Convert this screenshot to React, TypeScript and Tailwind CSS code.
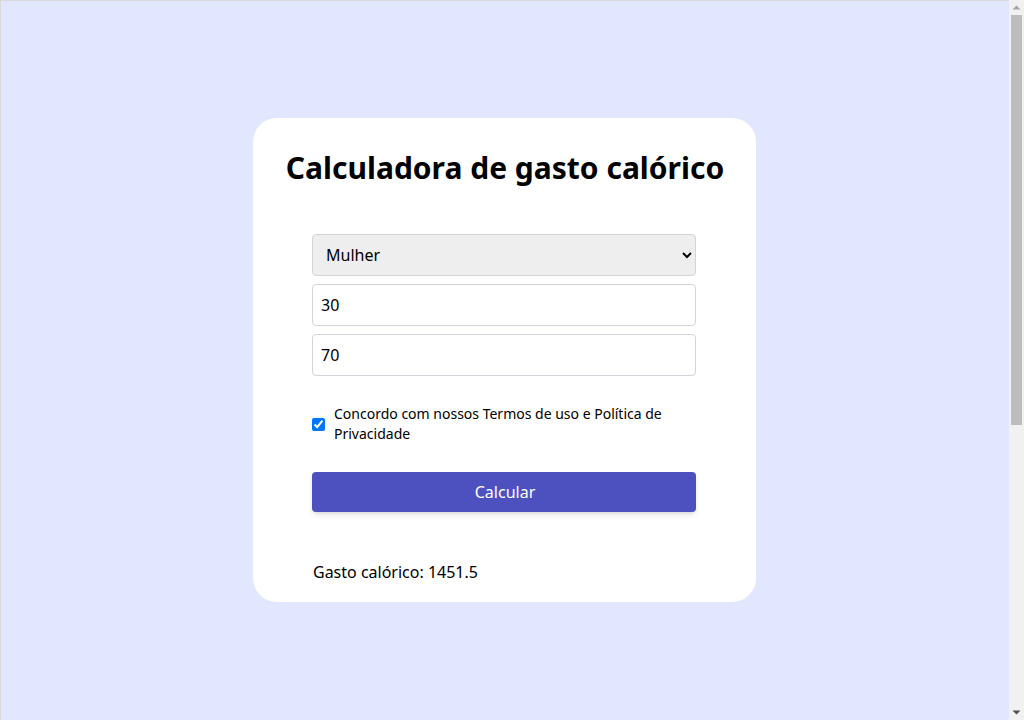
import React from "react";

function Scrollbar() {
  return (
    <div className="flex h-full w-[15px] shrink-0 flex-col bg-[#f1f1f1]">
      <div className="flex h-[15px] items-center justify-center">
        <svg width="9" height="5" viewBox="0 0 9 5">
          <polygon points="0.5,4.5 4.5,0.5 8.5,4.5" fill="#a3a3a3" />
        </svg>
      </div>
      <div className="flex-1 px-[2px]">
        <div className="h-[410px] w-full bg-[#bdbdbd]" />
      </div>
      <div className="flex h-[15px] items-center justify-center">
        <svg width="9" height="5" viewBox="0 0 9 5">
          <polygon points="0.5,0.5 8.5,0.5 4.5,4.5" fill="#505050" />
        </svg>
      </div>
    </div>
  );
}

export default function App() {
  return (
    <div
      className="flex h-[720px] overflow-hidden"
      style={{ fontFamily: '"Noto Sans", sans-serif' }}
    >
      <div className="flex-1 bg-[#e0e7ff] pt-[118px] shadow-[inset_1px_1px_0_#d9d9d9]">
        <div className="mx-auto w-[503px] bg-white rounded-[24px] pl-[59px] pr-[60px] pt-[30px] pb-[18px]">
          <h1 className="text-center text-[30px] font-bold text-black leading-[40px] -ml-[38px] -mr-[40px]">
            Calculadora de gasto calórico
          </h1>
          <form className="mt-[46px] flex flex-col gap-2">
            <select
              defaultValue="Mulher"
              className="h-[42px] w-full rounded-[4px] border border-[#d1d5db] bg-[#eeeeee] pl-[9px] pr-[8px] text-[16px] text-black"
              style={{ appearance: "auto" }}
            >
              <option>Mulher</option>
              <option>Homem</option>
            </select>
            <input
              defaultValue="30"
              className="h-[42px] w-full rounded-[4px] border border-[#d1d5db] bg-white px-[8px] text-[16px] text-black"
            />
            <input
              defaultValue="70"
              className="h-[42px] w-full rounded-[4px] border border-[#d1d5db] bg-white px-[8px] text-[16px] text-black"
            />
            <label className="mt-[20px] flex items-center gap-[9px] text-[14px] leading-[20px] text-black">
              <input type="checkbox" defaultChecked className="m-0 h-[13px] w-[13px] shrink-0" style={{ appearance: "auto" }} />
              <span>Concordo com nossos Termos de uso e Política de Privacidade</span>
            </label>
            <button
              type="button"
              className="mt-[20px] h-[40px] w-full rounded-[4px] bg-[#4c51bf] pl-[2px] text-[16px] text-white shadow-md"
            >
              Calcular
            </button>
          </form>
          <p className="mt-[48px] pl-[1px] text-[16px] leading-[24px] text-black">Gasto calórico: 1451.5</p>
        </div>
      </div>
      <Scrollbar />
    </div>
  );
}
